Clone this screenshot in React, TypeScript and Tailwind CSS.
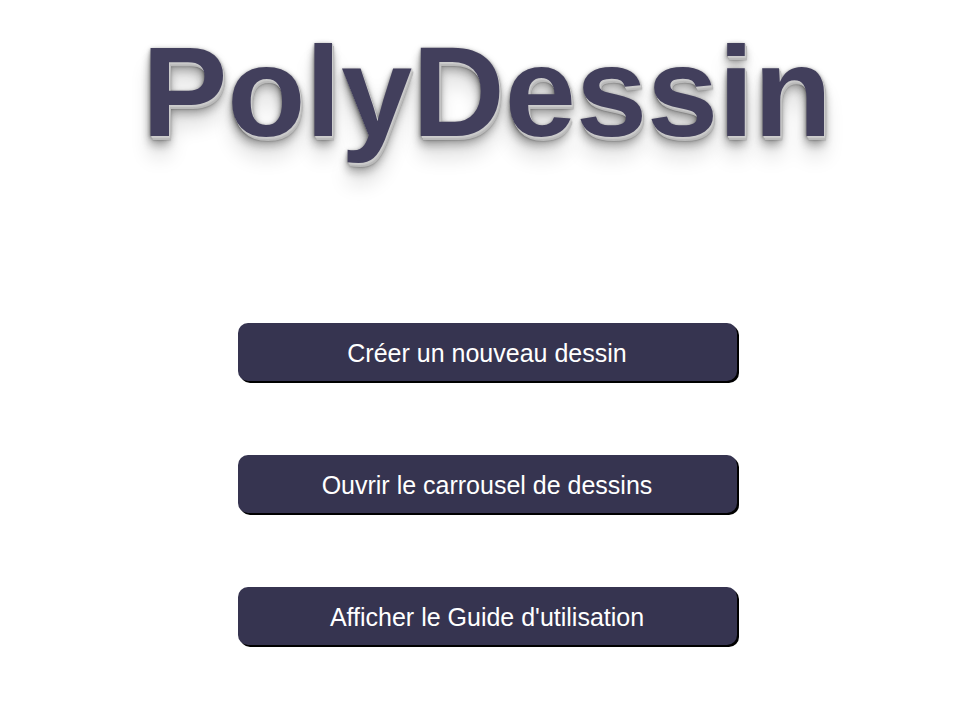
export default function App() {
  const buttons = [
    "Créer un nouveau dessin",
    "Ouvrir le carrousel de dessins",
    "Afficher le Guide d'utilisation",
  ];
  return (
    <div className="w-[966px] h-[728px] bg-white pl-[8px] flex flex-col items-center font-['Liberation_Sans',Arial,sans-serif]">
      <h1 className="mt-[18px] text-[128px] leading-[147px] font-bold text-[#423f5c] [text-shadow:1px_1px_0_#ccc,1px_2px_0_#c9c9c9,2px_3px_0_#bbb,2px_4px_0_#b9b9b9,2px_5px_1px_rgba(0,0,0,.1),0_0_5px_rgba(0,0,0,.1),0_1px_3px_rgba(0,0,0,.3),0_3px_5px_rgba(0,0,0,.2),0_5px_10px_rgba(0,0,0,.25),0_10px_10px_rgba(0,0,0,.2),0_20px_20px_rgba(0,0,0,.15)]">
        PolyDessin
      </h1>
      <div className="mt-[158px] flex flex-col gap-[74px]">
        {buttons.map((b) => (
          <button
            key={b}
            className="w-[499px] h-[58px] pt-[3px] rounded-[10px] bg-[#363450] text-white text-[25px] shadow-[2px_2px_0_#000]"
          >
            {b}
          </button>
        ))}
      </div>
    </div>
  );
}
